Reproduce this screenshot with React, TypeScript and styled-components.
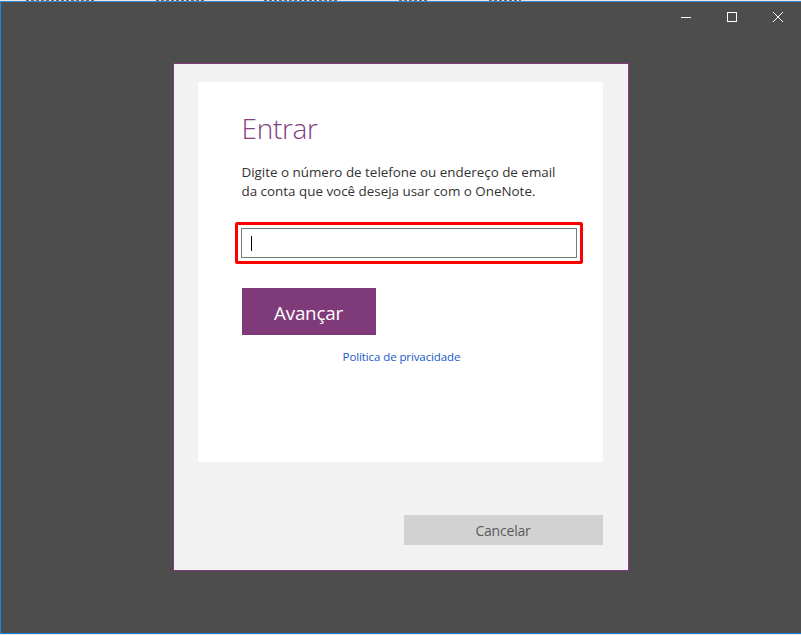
import React from "react";
import styled, { createGlobalStyle } from "styled-components";

const GlobalStyle = createGlobalStyle`
  html, body { margin: 0; padding: 0; }
  body { width: 801px; height: 635px; overflow: hidden; background: #4d4d4d; }
  * { box-sizing: border-box; }
`;

const Screen = styled.div`
  width: 801px;
  height: 635px;
  display: flex;
  flex-direction: column;
  background: #4d4d4d;
  font-family: "Open Sans", "Noto Sans", sans-serif;
`;

const BehindStrip = styled.div`
  height: 1px;
  flex: none;
  overflow: hidden;
  background: #e6e6e6;
  display: flex;
  gap: 60px;
  padding-left: 26px;
`;

const BehindMark = styled.div<{ $w: number }>`
  width: ${(p) => p.$w}px;
  height: 1px;
  background: repeating-linear-gradient(90deg, #666 0 3px, #e6e6e6 3px 5px);
`;

const Window = styled.div`
  flex: 1;
  display: flex;
  flex-direction: column;
  border-top: 1px solid #3a8ad0;
  border-left: 1px solid #1f87e0;
  border-bottom: 1px solid #1f87e0;
`;

const TitleBar = styled.div`
  height: 30px;
  display: flex;
  justify-content: flex-end;
  flex: none;
`;

const CaptionButton = styled.div`
  width: 46px;
  height: 30px;
  display: flex;
  align-items: center;
  justify-content: center;
  color: #fff;
`;

const Content = styled.div`
  flex: 1;
  display: flex;
  justify-content: center;
  padding-top: 31px;
  padding-right: 1px;
`;

const Dialog = styled.div`
  width: 456px;
  height: 508px;
  background: #f2f2f2;
  border: 1px solid #833b80;
  padding: 18px 25px 0 24px;
  display: flex;
  flex-direction: column;
`;

const Card = styled.div`
  width: 405px;
  height: 380px;
  background: #ffffff;
  padding: 27px 20px 0 44px;
  display: flex;
  flex-direction: column;
`;

const Title = styled.h1`
  margin: 0;
  font-family: "Open Sans", sans-serif;
  font-weight: 300;
  font-size: 28px;
  line-height: 38px;
  color: #84407f;
  letter-spacing: -0.3px;
`;

const Description = styled.p`
  margin: 16px 0 0 0;
  font-size: 13.4px;
  line-height: 19px;
  color: #333333;
  letter-spacing: 0;
  white-space: nowrap;
`;

const Highlight = styled.div`
  margin: 21px 0 0 -7px;
  width: 348px;
  height: 42px;
  border: 3px solid #ff0000;
  border-radius: 2px;
  padding: 3px 3px 3px 3px;
`;

const InputBox = styled.div`
  width: 100%;
  height: 100%;
  border: 1px solid #7a7a7a;
  display: flex;
  align-items: center;
  padding-left: 9px;
`;

const Caret = styled.div`
  width: 1px;
  height: 15px;
  background: #000;
`;

const PrimaryButton = styled.button`
  margin-top: 24px;
  width: 134px;
  height: 47px;
  border: none;
  background: #7f3b79;
  color: #ffffff;
  font-family: "Open Sans", sans-serif;
  font-size: 18.8px;
  padding: 2px 0 0 0;
  letter-spacing: -0.2px;
`;

const LinkRow = styled.div`
  margin-top: 14px;
  width: 320px;
  display: flex;
  justify-content: center;
`;

const PrivacyLink = styled.a`
  font-size: 11.5px;
  color: #1758c8;
  text-decoration: none;
  letter-spacing: -0.1px;
`;

const Footer = styled.div`
  margin-top: 53px;
  display: flex;
  justify-content: flex-end;
`;

const SecondaryButton = styled.button`
  width: 199px;
  height: 30px;
  border: none;
  background: #d2d2d2;
  color: #5a5a5a;
  font-family: "Open Sans", sans-serif;
  font-size: 14px;
  padding: 0;
  letter-spacing: -0.2px;
`;

export default function App() {
  return (
    <>
      <GlobalStyle />
      <Screen>
        <BehindStrip>
          <BehindMark $w={70} />
          <BehindMark $w={48} />
          <BehindMark $w={75} />
          <BehindMark $w={30} />
          <BehindMark $w={32} />
        </BehindStrip>
        <Window>
          <TitleBar>
            <CaptionButton>
              <svg width="10" height="10" viewBox="0 0 10 10">
                <path d="M0 5.5h10" stroke="#fff" strokeWidth="1" />
              </svg>
            </CaptionButton>
            <CaptionButton>
              <svg width="10" height="10" viewBox="0 0 10 10">
                <rect x="0.5" y="0.5" width="9" height="9" fill="none" stroke="#fff" strokeWidth="1" />
              </svg>
            </CaptionButton>
            <CaptionButton>
              <svg width="10" height="10" viewBox="0 0 10 10">
                <path d="M0 0L10 10M10 0L0 10" stroke="#fff" strokeWidth="1" />
              </svg>
            </CaptionButton>
          </TitleBar>
          <Content>
            <Dialog>
              <Card>
                <Title>Entrar</Title>
                <Description>
                  Digite o número de telefone ou endereço de email
                  <br />
                  da conta que você deseja usar com o OneNote.
                </Description>
                <Highlight>
                  <InputBox>
                    <Caret />
                  </InputBox>
                </Highlight>
                <PrimaryButton>Avançar</PrimaryButton>
                <LinkRow>
                  <PrivacyLink href="#">Política de privacidade</PrivacyLink>
                </LinkRow>
              </Card>
              <Footer>
                <SecondaryButton>Cancelar</SecondaryButton>
              </Footer>
            </Dialog>
          </Content>
        </Window>
        <BehindStrip />
      </Screen>
    </>
  );
}
